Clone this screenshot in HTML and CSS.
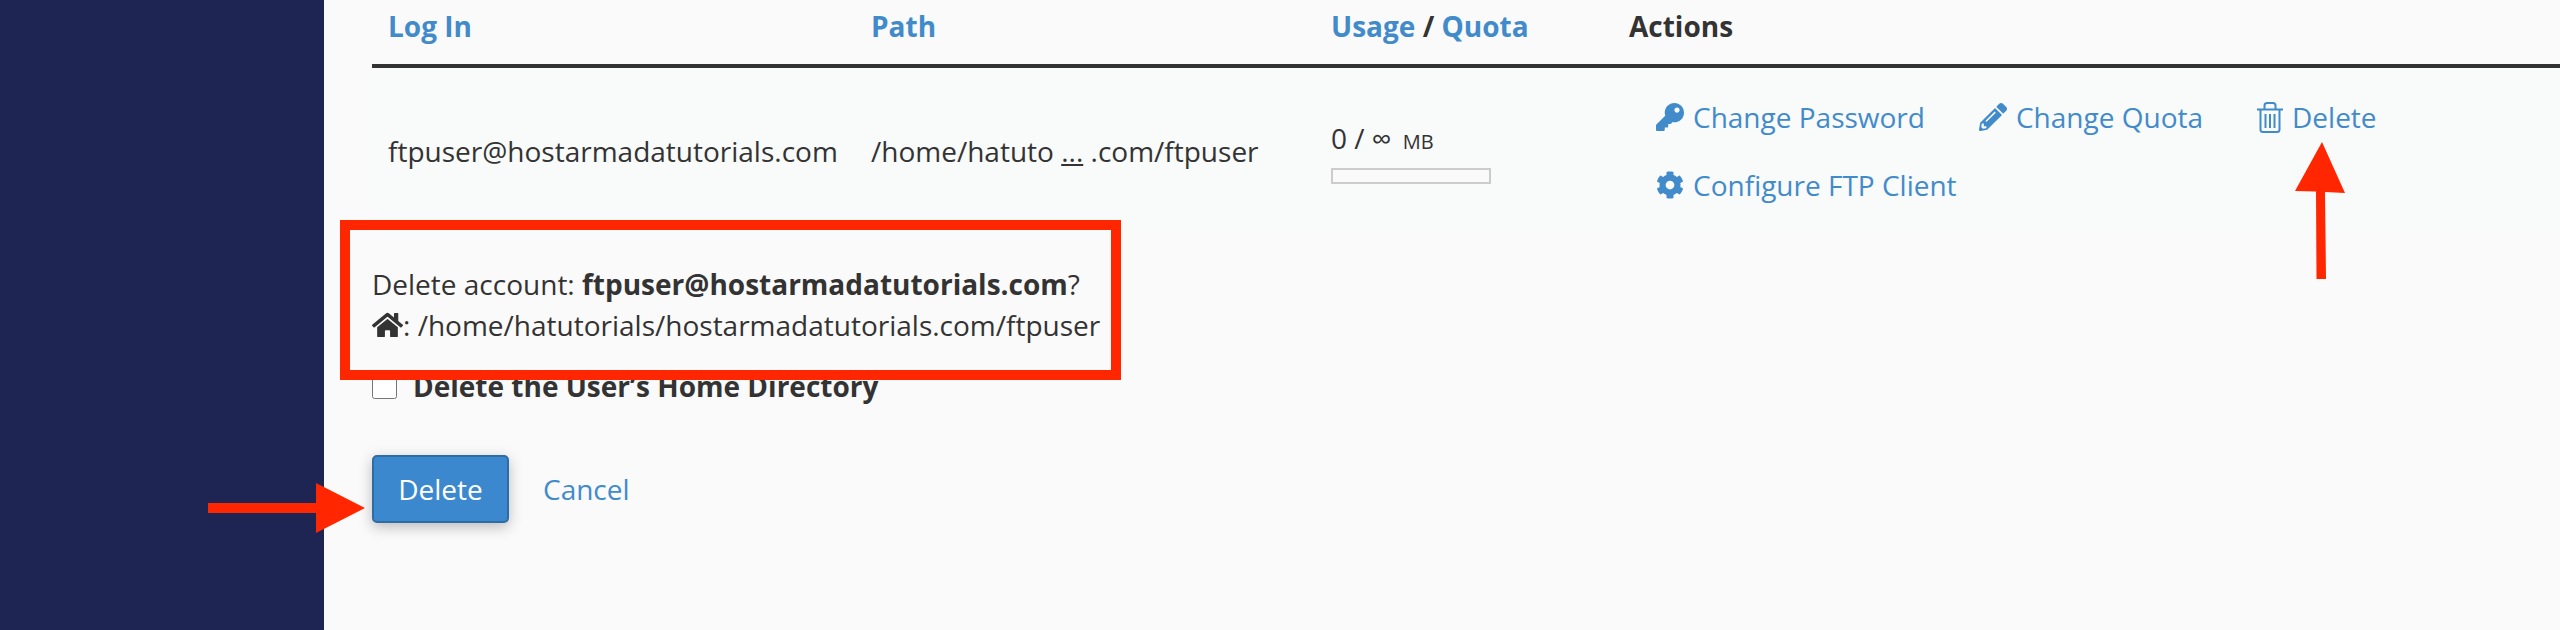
FILE: index.html
```html
<!DOCTYPE html>
<html lang="en">
<head>
<meta charset="utf-8">
<title>FTP Accounts</title>
<link rel="stylesheet" href="styles.css">
</head>
<body>
<div class="page">
  <aside class="sidebar"></aside>
  <main class="content">
    <table class="accounts">
      <colgroup>
        <col class="col-login"><col class="col-path"><col class="col-usage"><col>
      </colgroup>
      <thead>
        <tr>
          <th><a href="#">Log In</a></th>
          <th><a href="#">Path</a></th>
          <th><a href="#">Usage</a> / <a href="#">Quota</a></th>
          <th>Actions</th>
        </tr>
      </thead>
      <tbody>
        <tr>
          <td>ftpuser@hostarmadatutorials.com</td>
          <td>/home/hatuto <span class="ellipsis">...</span> .com/ftpuser</td>
          <td>
            <div class="usage-text">0 / ∞ <span class="unit">MB</span></div>
            <div class="bar"></div>
          </td>
          <td>
            <div class="actions">
              <a class="action" href="#">
                <svg class="icon" viewBox="0 0 512 512"><path d="M512 176.001C512 273.203 433.202 352 336 352c-11.22 0-22.19-1.062-32.827-3.069l-24.012 27.014A23.999 23.999 0 0 1 261.223 384H224v40c0 13.255-10.745 24-24 24h-40v40c0 13.255-10.745 24-24 24H24c-13.255 0-24-10.745-24-24v-78.059c0-6.365 2.529-12.47 7.029-16.971l161.802-161.802C163.108 213.814 160 195.271 160 176 160 78.798 238.797.001 335.999 0 433.488-.001 512 78.511 512 176.001zM336 128c0 26.51 21.49 48 48 48s48-21.49 48-48-21.49-48-48-48-48 21.49-48 48z"/></svg>Change Password</a>
              <a class="action" href="#">
                <svg class="icon" viewBox="0 0 512 512"><path d="M497.9 142.1l-46.1 46.1c-4.7 4.7-12.3 4.7-17 0l-111-111c-4.7-4.7-4.7-12.3 0-17l46.1-46.1c18.7-18.7 49.1-18.7 67.9 0l60.1 60.1c18.8 18.7 18.8 49.1 0 67.9zM284.2 99.8L21.6 362.4.4 483.9c-2.9 16.4 11.4 30.6 27.8 27.8l121.5-21.3 262.6-262.6c4.7-4.7 4.7-12.3 0-17l-111-111c-4.8-4.7-12.4-4.7-17.1 0zM124.1 339.9c-5.5-5.5-5.5-14.3 0-19.8l154-154c5.5-5.5 14.3-5.5 19.8 0s5.5 14.3 0 19.8l-154 154c-5.5 5.5-14.3 5.5-19.8 0zM88 424h48v36.3l-64.5 11.3-31.1-31.1L51.7 376H88v48z"/></svg>Change Quota</a>
              <a class="action" href="#">
                <svg class="icon icon-trash" viewBox="0 0 26 31"><path class="trash" d="M0 7.500H26M7.500 7V3.500Q7.500 1 10 1H16Q18.500 1 18.500 3.500V7M3.500 8V27.500Q3.500 30 6 30H20Q22.500 30 22.500 27.500V8M8.500 12V26M13 12V26M17.500 12V26"/></svg>Delete</a>
              <a class="action" href="#">
                <svg class="icon" viewBox="0 0 512 512"><path d="M487.4 315.7l-42.6-24.6c4.300-23.200 4.300-47 0-70.200l42.600-24.600c4.900-2.800 7.100-8.600 5.500-14-11.100-35.600-30-67.800-54.700-94.600-3.800-4.100-10-5.100-14.800-2.300L380.800 110c-17.900-15.400-38.500-27.300-60.800-35.100V25.800c0-5.600-3.900-10.500-9.400-11.700-36.700-8.200-74.300-7.800-109.200 0-5.500 1.200-9.400 6.100-9.400 11.700V75c-22.200 7.900-42.800 19.800-60.800 35.100L88.700 85.500c-4.900-2.800-11-1.900-14.800 2.300-24.700 26.700-43.600 58.900-54.700 94.600-1.700 5.400.6 11.200 5.500 14L67.300 221c-4.300 23.200-4.300 47 0 70.200l-42.600 24.600c-4.900 2.800-7.100 8.600-5.500 14 11.100 35.600 30 67.800 54.700 94.600 3.800 4.100 10 5.100 14.800 2.300l42.600-24.600c17.900 15.400 38.500 27.300 60.800 35.100v49.200c0 5.600 3.900 10.500 9.400 11.700 36.700 8.200 74.300 7.800 109.200 0 5.500-1.200 9.400-6.100 9.400-11.700v-49.200c22.200-7.900 42.800-19.800 60.800-35.100l42.600 24.600c4.900 2.800 11 1.900 14.800-2.300 24.700-26.700 43.600-58.900 54.700-94.600 1.500-5.500-.7-11.300-5.600-14.100zM256 336c-44.100 0-80-35.900-80-80s35.900-80 80-80 80 35.900 80 80-35.900 80-80 80z"/></svg>Configure FTP Client</a>
            </div>
          </td>
        </tr>
      </tbody>
    </table>

    <div class="confirm">
      <p class="message">Delete account: <strong>ftpuser@hostarmadatutorials.com</strong>?<br>
        <svg class="home" viewBox="0 0 576 512"><path d="M280.37 148.26L96 300.11V464a16 16 0 0 0 16 16l112.06-.29a16 16 0 0 0 15.92-16V368a16 16 0 0 1 16-16h64a16 16 0 0 1 16 16v95.64a16 16 0 0 0 16 16.05L464 480a16 16 0 0 0 16-16V300L295.67 148.26a12.19 12.19 0 0 0-15.3 0zM571.6 251.47L488 182.56V44.05a12 12 0 0 0-12-12h-56a12 12 0 0 0-12 12v72.61L318.47 43a48 48 0 0 0-61 0L4.34 251.47a12 12 0 0 0-1.6 16.9l25.5 31A12 12 0 0 0 45.15 301l235.22-193.74a12.19 12.19 0 0 1 15.3 0L530.9 301a12 12 0 0 0 16.9-1.6l25.5-31a12 12 0 0 0-1.7-16.93z"/></svg>: /home/hatutorials/hostarmadatutorials.com/ftpuser</p>
      <label class="check"><input type="checkbox"><span>Delete the User’s Home Directory</span></label>
      <div class="buttons">
        <button class="btn" type="button">Delete</button>
        <a class="cancel" href="#">Cancel</a>
      </div>
    </div>
  </main>

  <div class="callout"></div>
  <svg class="arrow arrow-up" viewBox="0 0 52 139"><polygon points="27,0 0,49 21,49.500 21.500,137 31,137 30,50 50,51"/></svg>
  <svg class="arrow arrow-right" viewBox="0 0 157 50"><polygon points="0,20 108,20 108,0 157,25 108,50 108,30 0,30"/></svg>
</div>
</body>
</html>
```

FILE: styles.css
```css
* { box-sizing: border-box; }
html, body { margin: 0; padding: 0; }
body {
  font-family: "Open Sans", "Liberation Sans", sans-serif;
  font-size: 28px;
  line-height: 40px;
  color: #333;
  background: #fafafa;
}
a { color: #428bca; text-decoration: none; }

.page { position: relative; display: flex; height: 630px; overflow: hidden; }
.sidebar { flex: 0 0 324px; background: #1f2553; }
.content { flex: 1; padding-left: 48px; min-width: 0; }

.accounts { width: 100%; table-layout: fixed; border-collapse: collapse; }
.col-login { width: 483px; }
.col-path { width: 460px; }
.col-usage { width: 298px; }
.accounts th {
  height: 66px;
  padding: 0 16px 12px;
  text-align: left;
  font-weight: 700;
  border-bottom: 4px solid #333;
}
.accounts td { height: 168px; padding: 0 16px; vertical-align: middle; background: #f9fafa; }

.ellipsis { text-decoration: underline; }
.usage-text { line-height: 40px; }
.unit { font-size: 20px; margin-left: 4px; }
.bar { width: 160px; height: 16px; margin-top: 6px; border: 2px solid #ccc; background: #fafafa; }

.actions { display: flex; flex-wrap: wrap; }
.action { display: flex; align-items: center; height: 68px; padding: 0 27px; white-space: nowrap; }
.actions .action:last-child { flex-basis: 100%; }
.icon { width: 28px; height: 28px; margin-right: 9px; fill: currentColor; flex: none; }
.icon-trash { width: 26px; height: 31px; }
.trash { fill: none; stroke: currentColor; stroke-width: 2; }

.message { margin: 30px 0 0; line-height: 41px; }
.home { width: 31px; height: 28px; vertical-align: -3px; fill: #333; }

.check { display: flex; align-items: center; margin-top: 20px; height: 40px; font-weight: 700; }
.check input { width: 25px; height: 25px; margin: 0 16px 0 0; }

.buttons { display: flex; align-items: center; margin-top: 49px; }
.btn {
  width: 137px;
  height: 68px;
  padding: 0;
  font: inherit;
  color: #fff;
  background: #3b88ce;
  border: 2px solid #2e6da4;
  border-radius: 5px;
  box-shadow: 0 4px 14px rgba(0, 0, 0, .25);
}
.cancel { margin-left: 34px; }

.callout {
  position: absolute;
  left: 340px;
  top: 220px;
  width: 781px;
  height: 160px;
  border: 10px solid #ff2600;
}
.arrow { position: absolute; fill: #ff2600; }
.arrow-up { left: 2295px; top: 142px; width: 52px; height: 139px; }
.arrow-right { left: 208px; top: 483px; width: 157px; height: 50px; }
```
